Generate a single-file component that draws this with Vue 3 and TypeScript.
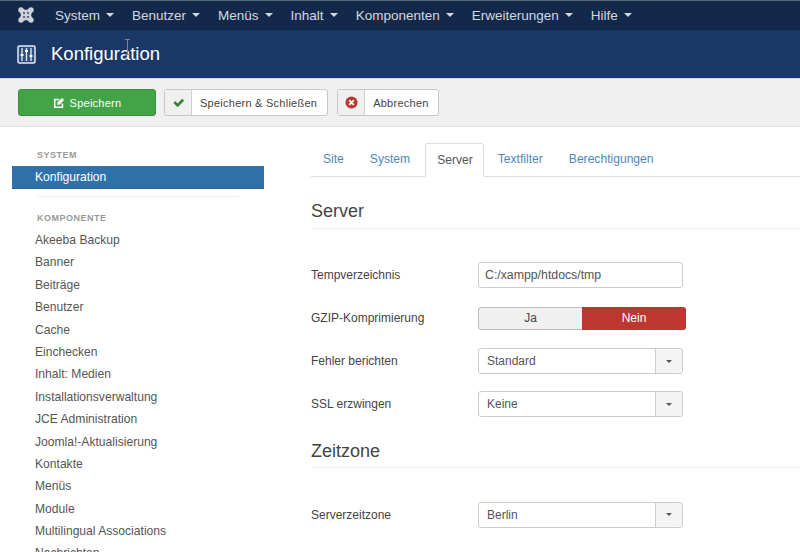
<script setup lang="ts">
const menus: string[] = ['System', 'Benutzer', 'Menüs', 'Inhalt', 'Komponenten', 'Erweiterungen', 'Hilfe']
const comps: string[] = ['Akeeba Backup', 'Banner', 'Beiträge', 'Benutzer', 'Cache', 'Einchecken', 'Inhalt: Medien', 'Installationsverwaltung', 'JCE Administration', 'Joomla!-Aktualisierung', 'Kontakte', 'Menüs', 'Module', 'Multilingual Associations', 'Nachrichten']
const tabs: string[] = ['Site', 'System', 'Server', 'Textfilter', 'Berechtigungen']
</script>

<template>
  <div class="page">
    <nav class="nav">
      <svg class="logo" viewBox="0 0 16 16" width="16" height="16">
        <g fill="#cdd1d8">
          <circle cx="3" cy="3" r="2.700" />
          <circle cx="13" cy="3" r="2.700" />
          <circle cx="3" cy="13" r="2.700" />
          <circle cx="13" cy="13" r="2.700" />
          <path d="M3 1L8 3l5-2 2 2-2 5 2 5-2 2-5-2-5 2-2-2 2-5-2-5z" />
        </g>
        <g fill="#5f6b80">
          <rect x="5" y="5" width="2" height="2" />
          <rect x="9" y="5" width="2" height="2" />
          <rect x="5" y="9" width="2" height="2" />
          <rect x="9" y="9" width="2" height="2" />
        </g>
      </svg>
      <ul class="menu">
        <li v-for="m in menus" :key="m">{{ m }}<span class="caret"></span></li>
      </ul>
    </nav>
    <header class="head">
      <svg class="cfg" viewBox="0 0 19 19" width="19" height="19">
        <rect x="1" y="1" width="17" height="17" rx="1.500" fill="#2d4d7d" stroke="#e8ebf0" stroke-width="1.500" />
        <path d="M5 3v13M9.500 3v13M14 3v13" stroke="#dce5f0" stroke-width="1.400" />
        <path d="M3.500 10h3M8 6h3M12.500 11h3" stroke="#fff" stroke-width="2.200" />
      </svg>
      <h1>Konfiguration</h1>
    </header>
    <div class="toolbar">
      <button class="btn save">
        <svg viewBox="0 0 14 14" width="12" height="12">
          <path d="M11 7.500V12H2V3h5" fill="none" stroke="#fff" stroke-width="1.800" />
          <path d="M5 6.500l5.500-5.500 2.500 2.500L7.500 9H5z" fill="#fff" />
        </svg>
        Speichern
      </button>
      <button class="btn plain close">
        <span class="ico">
          <svg viewBox="0 0 14 14" width="13" height="13">
            <path d="M1.500 7.500l2-2 2.500 2.500 5-5 2 2-7 7z" fill="#378137" />
          </svg>
        </span>
        <span class="lbl">Speichern &amp; Schließen</span>
      </button>
      <button class="btn plain">
        <span class="ico">
          <svg viewBox="0 0 14 14" width="13" height="13">
            <circle cx="7" cy="7" r="6.500" fill="#bd362f" />
            <path d="M4.500 4.500l5 5M9.500 4.500l-5 5" stroke="#fff" stroke-width="2" />
          </svg>
        </span>
        <span class="lbl">Abbrechen</span>
      </button>
    </div>
    <main class="body">
      <aside class="side">
        <div class="sec first">SYSTEM</div>
        <div class="item active">Konfiguration</div>
        <hr class="rule" />
        <div class="sec second">KOMPONENTE</div>
        <div v-for="c in comps" :key="c" class="item">{{ c }}</div>
      </aside>
      <section class="content">
        <ul class="tabs">
          <li v-for="t in tabs" :key="t" :class="{ on: t === 'Server' }">{{ t }}</li>
        </ul>
        <h2>Server</h2>
        <div class="rows">
          <div class="row">
            <label>Tempverzeichnis</label>
            <div class="input">C:/xampp/htdocs/tmp</div>
          </div>
          <div class="row">
            <label>GZIP-Komprimierung</label>
            <div class="toggle"><span class="ja">Ja</span><span class="nein">Nein</span></div>
          </div>
          <div class="row">
            <label>Fehler berichten</label>
            <div class="select"><span class="val">Standard</span><span class="arrow"><i></i></span></div>
          </div>
          <div class="row">
            <label>SSL erzwingen</label>
            <div class="select"><span class="val">Keine</span><span class="arrow"><i></i></span></div>
          </div>
        </div>
        <h2 class="second">Zeitzone</h2>
        <div class="rows">
          <div class="row">
            <label>Serverzeitzone</label>
            <div class="select"><span class="val">Berlin</span><span class="arrow"><i></i></span></div>
          </div>
        </div>
      </section>
    </main>
    <svg class="cursor" viewBox="0 0 7 16" width="7" height="16">
      <path d="M1 .5h5M1 15.500h5M3.500 1v14" stroke="#8a8468" stroke-width="1" fill="none" />
    </svg>
  </div>
</template>

<style>
html, body { margin: 0; background: #fff; overflow: hidden; }
</style>

<style scoped>
.page {
  position: relative;
  width: 800px;
  height: 552px;
  overflow: hidden;
  font-family: "Liberation Sans", Arial, sans-serif;
  font-size: 12px;
  color: #555;
}
.nav {
  height: 30px;
  box-sizing: border-box;
  background: #13294a;
  border-top: 1px solid #5a6880;
  border-bottom: 1px solid #0f2240;
  display: flex;
  align-items: center;
  padding-left: 18px;
}
.logo { flex: none; }
.menu {
  list-style: none;
  margin: 0 0 0 21px;
  padding: 0;
  display: flex;
  gap: 18px;
  font-size: 13.5px;
  color: #d3d8e0;
}
.menu li { display: flex; align-items: center; }
.caret {
  margin-left: 6px;
  width: 0;
  height: 0;
  border-left: 4px solid transparent;
  border-right: 4px solid transparent;
  border-top: 4px solid #d3d8e0;
}
.head {
  height: 48px;
  box-sizing: border-box;
  background: #1a3867;
  display: flex;
  align-items: center;
  padding-left: 17px;
  color: #fff;
}
.cfg { flex: none; }
h1 {
  margin: 0 0 0 15px;
  font-size: 18.5px;
  font-weight: 400;
}
.toolbar {
  height: 49px;
  box-sizing: border-box;
  background: #f0f0f0;
  border-top: 1px solid #d8d8d8;
  border-bottom: 1px solid #e2e2e2;
  display: flex;
  align-items: center;
  padding-left: 18px;
  gap: 8px;
}
.btn {
  height: 27px;
  box-sizing: border-box;
  border-radius: 3px;
  font: inherit;
  font-size: 11px;
  letter-spacing: 0.25px;
  padding: 0;
  display: flex;
  align-items: stretch;
}
.save {
  width: 138px;
  background: #43a447;
  border: 1px solid #3a8f3e;
  color: #fff;
  align-items: center;
  justify-content: center;
  gap: 5px;
}
.plain {
  background: #fff;
  border: 1px solid #c8c8c8;
  color: #444;
}
.close { margin-right: 1px; }
.close .lbl { padding-right: 10px; }
.ico {
  width: 26px;
  background: #f0f0f0;
  border-right: 1px solid #d0d0d0;
  display: flex;
  align-items: center;
  justify-content: center;
}
.lbl {
  padding: 0 9px 0 8px;
  display: flex;
  align-items: center;
}
.body {
  display: flex;
  align-items: flex-start;
}
.side {
  width: 252px;
  margin-left: 12px;
  flex: none;
}
.sec {
  font-size: 9px;
  font-weight: 700;
  letter-spacing: 0.5px;
  color: #999;
  padding-left: 25px;
  line-height: 12px;
}
.sec.first { margin-top: 22px; margin-bottom: 5px; }
.sec.second { margin-bottom: 5px; }
.item {
  height: 22.4px;
  line-height: 22.400px;
  padding-left: 23px;
  color: #555;
  font-size: 12.1px;
}
.item.active {
  height: 23px;
  line-height: 23px;
  background: #2f71aa;
  color: #fff;
  border-bottom: 1px solid #2a6496;
  box-sizing: border-box;
}
.rule {
  border: 0;
  border-top: 1px solid #eee;
  margin: 7px 25px 15px;
}
.content {
  margin-left: 47px;
  flex: 1;
}
.tabs {
  list-style: none;
  margin: 16px 0 0;
  padding: 0;
  display: flex;
  height: 34px;
  box-sizing: border-box;
  border-bottom: 1px solid #ddd;
  color: #4b88c0;
  font-size: 12.1px;
}
.tabs li {
  padding: 0 12px;
  line-height: 33px;
  margin-right: 2px;
}
.tabs li.on {
  background: #fff;
  color: #555;
  border: 1px solid #ddd;
  border-bottom-color: #fff;
  border-radius: 3px 3px 0 0;
  height: 34px;
  box-sizing: border-box;
  padding: 0 10px 0 11px;
  margin-left: 1px;
}
h2 {
  margin: 0;
  padding: 24px 0 7px;
  font-size: 18px;
  font-weight: 400;
  line-height: 20px;
  color: #444;
  border-bottom: 1px solid #eee;
}
h2.second { padding: 15.5px 0 6px; }
.rows { padding-top: 24.5px; }
.second + .rows { padding-top: 25px; }
.row {
  display: flex;
  align-items: center;
  height: 43px;
}
.row label { width: 167px; flex: none; color: #444; }
.input, .select {
  width: 205px;
  height: 26px;
  box-sizing: border-box;
  border: 1px solid #ccc;
  border-radius: 3px;
  background: #fff;
  display: flex;
  align-items: center;
  color: #555;
}
.input { padding-left: 6px; font-size: 12.3px; }
.val { flex: 1; padding-left: 8px; }
.arrow {
  width: 26px;
  align-self: stretch;
  background: #f4f4f4;
  border-left: 1px solid #ccc;
  display: flex;
  align-items: center;
  justify-content: center;
  border-radius: 0 3px 3px 0;
}
.arrow i {
  width: 0;
  height: 0;
  border-left: 3.500px solid transparent;
  border-right: 3.500px solid transparent;
  border-top: 3.500px solid #555;
}
.toggle {
  width: 208px;
  height: 23px;
  display: flex;
  border-radius: 3px;
  overflow: hidden;
  text-align: center;
  line-height: 21px;
}
.ja {
  flex: none;
  width: 104px;
  box-sizing: border-box;
  background: #f0f0f0;
  border: 1px solid #bbb;
  border-right: 0;
  border-radius: 3px 0 0 3px;
  color: #444;
}
.nein {
  flex: 1;
  background: #bd362f;
  color: #fff;
  line-height: 23px;
}
.cursor {
  position: absolute;
  left: 124px;
  top: 39px;
}
</style>
